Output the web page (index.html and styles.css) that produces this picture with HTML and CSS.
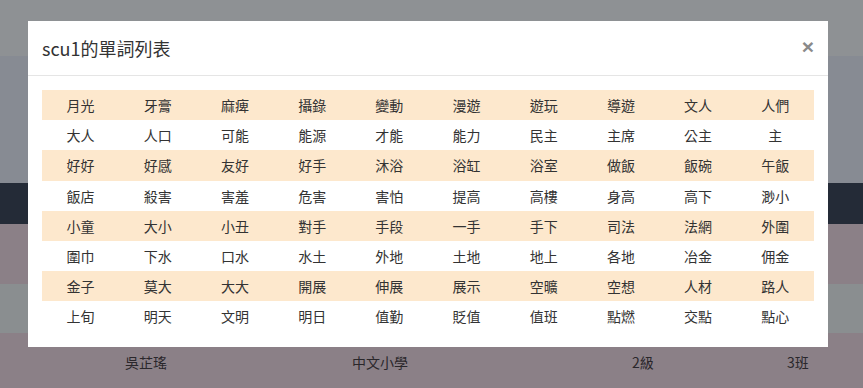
FILE: index.html
```html
<!DOCTYPE html>
<html lang="zh-Hant">
<head>
<meta charset="utf-8">
<title>scu1的單詞列表</title>
<link rel="stylesheet" href="styles.css">
</head>
<body>
<div class="page">
  <div class="band band-top"></div>
  <div class="band band-nav"></div>
  <div class="band band-dark"></div>
  <div class="band band-mauve"></div>
  <div class="band band-grey"></div>
  <div class="band band-mauve band-row">
    <span class="cell c1">吳芷瑤</span>
    <span class="cell c2">中文小學</span>
    <span class="cell c3">2級</span>
    <span class="cell c4">3班</span>
  </div>
</div>

<div class="modal">
  <div class="modal-header">
    <h4 class="modal-title">scu1的單詞列表</h4>
    <span class="close">×</span>
  </div>
  <div class="modal-body">
    <table class="words">
      <tr class="stripe"><td>月光</td><td>牙膏</td><td>麻痺</td><td>攝錄</td><td>變動</td><td>漫遊</td><td>遊玩</td><td>導遊</td><td>文人</td><td>人們</td></tr>
      <tr><td>大人</td><td>人口</td><td>可能</td><td>能源</td><td>才能</td><td>能力</td><td>民主</td><td>主席</td><td>公主</td><td>主</td></tr>
      <tr class="stripe"><td>好好</td><td>好感</td><td>友好</td><td>好手</td><td>沐浴</td><td>浴缸</td><td>浴室</td><td>做飯</td><td>飯碗</td><td>午飯</td></tr>
      <tr><td>飯店</td><td>殺害</td><td>害羞</td><td>危害</td><td>害怕</td><td>提高</td><td>高樓</td><td>身高</td><td>高下</td><td>渺小</td></tr>
      <tr class="stripe"><td>小童</td><td>大小</td><td>小丑</td><td>對手</td><td>手段</td><td>一手</td><td>手下</td><td>司法</td><td>法網</td><td>外圍</td></tr>
      <tr><td>圍巾</td><td>下水</td><td>口水</td><td>水土</td><td>外地</td><td>土地</td><td>地上</td><td>各地</td><td>冶金</td><td>佣金</td></tr>
      <tr class="stripe"><td>金子</td><td>莫大</td><td>大大</td><td>開展</td><td>伸展</td><td>展示</td><td>空曠</td><td>空想</td><td>人材</td><td>路人</td></tr>
      <tr><td>上旬</td><td>明天</td><td>文明</td><td>明日</td><td>值勤</td><td>貶值</td><td>值班</td><td>點燃</td><td>交點</td><td>點心</td></tr>
    </table>
  </div>
</div>
</body>
</html>
```

FILE: styles.css
```css
* { box-sizing: border-box; }

html, body {
  margin: 0;
  padding: 0;
}

body {
  width: 863px;
  height: 388px;
  overflow: hidden;
  font-family: "Noto Sans CJK TC", "Noto Sans", sans-serif;
  font-size: 14px;
  color: #333;
  position: relative;
}

.page {
  display: flex;
  flex-direction: column;
}

.band { width: 100%; }
.band-top { height: 56px; background: #8e9194; }
.band-nav { height: 127px; background: #878b93; }
.band-dark { height: 41px; background: #242b37; }
.band-mauve { height: 60px; background: #8b8087; }
.band-grey { height: 49px; background: #8a8e90; }

.band-row {
  height: 55px;
  display: grid;
  grid-template-columns: 227px 280px 155px auto;
  padding-left: 125px;
  align-items: center;
  padding-top: 3px;
  color: #2a272b;
  font-size: 14px;
}

.modal {
  position: absolute;
  top: 21px;
  left: 28px;
  width: 800px;
  background: #fff;
}

.modal-header {
  display: flex;
  justify-content: space-between;
  align-items: flex-start;
  padding: 15px 14px 14px 14px;
  border-bottom: 1px solid #e5e5e5;
  height: 55px;
}

.modal-title {
  margin: 0;
  font-size: 18px;
  font-weight: normal;
  line-height: 25px;
  color: #333;
}

.close {
  font-family: "Liberation Sans", Arial, sans-serif;
  font-size: 21px;
  font-weight: bold;
  line-height: 21px;
  color: #8a8a8a;
  margin-top: 0;
  margin-right: 0;
}

.modal-body {
  padding: 14px 14px 15px 14px;
}

.words {
  width: 100%;
  border-collapse: collapse;
  table-layout: fixed;
}

.words td {
  padding: 5px;
  line-height: 20.2px;
  text-align: center;
  font-size: 14px;
  color: #333;
}

.words tr.stripe td { background: #fde8cd; }
```
